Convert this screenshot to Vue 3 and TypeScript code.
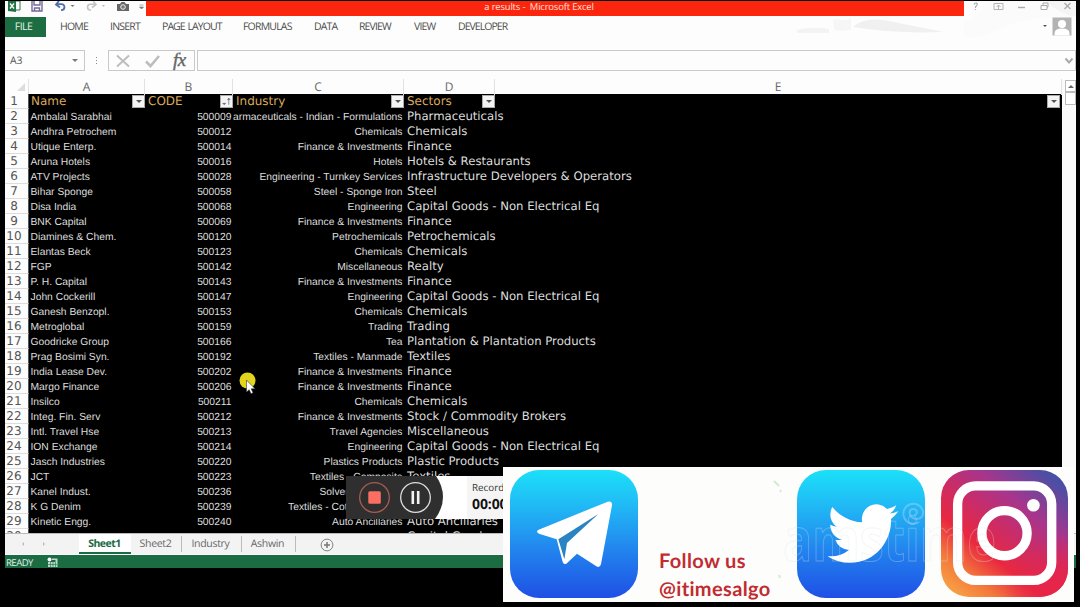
<script setup lang="ts">
interface Row {
  name: string
  code: string
  industry: string
  sector: string
}

const raw: [string, string, string, string][] = [
  ['Ambalal Sarabhai', '500009', 'armaceuticals - Indian - Formulations', 'Pharmaceuticals'],
  ['Andhra Petrochem', '500012', 'Chemicals', 'Chemicals'],
  ['Utique Enterp.', '500014', 'Finance & Investments', 'Finance'],
  ['Aruna Hotels', '500016', 'Hotels', 'Hotels & Restaurants'],
  ['ATV Projects', '500028', 'Engineering - Turnkey Services', 'Infrastructure Developers & Operators'],
  ['Bihar Sponge', '500058', 'Steel - Sponge Iron', 'Steel'],
  ['Disa India', '500068', 'Engineering', 'Capital Goods - Non Electrical Eq'],
  ['BNK Capital', '500069', 'Finance & Investments', 'Finance'],
  ['Diamines & Chem.', '500120', 'Petrochemicals', 'Petrochemicals'],
  ['Elantas Beck', '500123', 'Chemicals', 'Chemicals'],
  ['FGP', '500142', 'Miscellaneous', 'Realty'],
  ['P. H. Capital', '500143', 'Finance & Investments', 'Finance'],
  ['John Cockerill', '500147', 'Engineering', 'Capital Goods - Non Electrical Eq'],
  ['Ganesh Benzopl.', '500153', 'Chemicals', 'Chemicals'],
  ['Metroglobal', '500159', 'Trading', 'Trading'],
  ['Goodricke Group', '500166', 'Tea', 'Plantation & Plantation Products'],
  ['Prag Bosimi Syn.', '500192', 'Textiles - Manmade', 'Textiles'],
  ['India Lease Dev.', '500202', 'Finance & Investments', 'Finance'],
  ['Margo Finance', '500206', 'Finance & Investments', 'Finance'],
  ['Insilco', '500211', 'Chemicals', 'Chemicals'],
  ['Integ. Fin. Serv', '500212', 'Finance & Investments', 'Stock / Commodity Brokers'],
  ['Intl. Travel Hse', '500213', 'Travel Agencies', 'Miscellaneous'],
  ['ION Exchange', '500214', 'Engineering', 'Capital Goods - Non Electrical Eq'],
  ['Jasch Industries', '500220', 'Plastics Products', 'Plastic Products'],
  ['JCT', '500223', 'Textiles - Composite', 'Textiles'],
  ['Kanel Indust.', '500236', 'Solvent Extraction', 'Solvent Extraction'],
  ['K G Denim', '500239', 'Textiles - Cotton/Blended', 'Textiles'],
  ['Kinetic Engg.', '500240', 'Auto Ancillaries', 'Auto Ancillaries'],
  ['', '', '', 'Capital Goods'],
]
const rows: Row[] = raw.map(([name, code, industry, sector]) => ({ name, code, industry, sector }))
const ribbon = ['HOME', 'INSERT', 'PAGE LAYOUT', 'FORMULAS', 'DATA', 'REVIEW', 'VIEW', 'DEVELOPER']
const sheets = ['Sheet2', 'Industry', 'Ashwin']
</script>

<template>
  <div class="screen">
    <div class="excel">
      <header class="titlebar">
        <svg class="quick" width="141" height="15" viewBox="5 1 141 15">
          <path d="M14 1h6v9h-6z" fill="#fff" stroke="#287650" stroke-width="1" />
          <path d="M8 1h8v11l-8-1z" fill="#217346" />
          <path d="M10 3.5l4 5M14 3.5l-4 5" stroke="#fff" stroke-width="1.3" />
          <path d="M32 1v10h10V1M34 1v4h6V1M34.500 11V8h5v3" fill="none" stroke="#76689a" stroke-width="1.4" />
          <path d="M59 1l-3 3.500 4 3M56.500 4.200h5c4 0 4 6-.5 6" fill="none" stroke="#4b6fae" stroke-width="1.8" />
          <path d="M70.500 5h4l-2 2z" fill="#777" />
          <path d="M93 1l3 3.500-4 3M95.500 4.200h-5c-4 0-4 6 .5 6" fill="none" stroke="#c4c4c4" stroke-width="1.6" />
          <path d="M102 5h3l-1.500 2z" fill="#bbb" />
          <path d="M117 4h3l1.500-2h3l1.500 2h3v7h-12z" fill="#666" />
          <circle cx="123" cy="7" r="2.300" fill="#777" stroke="#eee" />
          <path d="M139.500 5h4M139.500 7h4l-2 2z" fill="#777" stroke="#777" stroke-width=".6" />
        </svg>
        <div class="title">a results -&nbsp; Microsoft Excel</div>
        <svg class="winctl" width="112" height="36" viewBox="964 1 112 36">
          <path d="M964 22q10-2 16-12t14-9h82v20q-40-8-76 8t-36 6z" fill="#fbfbfb" />
          <path d="M1046 1h30v16q-16-2-30-16z" fill="#f4f4f4" />
          <path d="M974 4.500c1-2.500 4-1.500 3 .5l-1.500 2v1M975.500 9v1" fill="none" stroke="#aaa" stroke-width="1.2" />
          <path d="M994 3.500h9v6h-9zM996.500 7l2-2 2 2M998.500 5v4" fill="none" stroke="#b4b4b4" />
          <path d="M1018 7.500h7" stroke="#aaa" stroke-width="1.4" />
          <path d="M1041 5.500h6v4h-6zM1043 5v-2h5v4h-1" fill="none" stroke="#aaa" />
          <path d="M1064.500 3l6 6M1070.500 3l-6 6" stroke="#aaa" stroke-width="1.3" />
          <path d="M1043 25h4l-2 2z" fill="#555" />
          <path d="M1052.500 17.500h19v18h-19z" fill="#b3b3b3" />
          <circle cx="1062" cy="24" r="4" fill="#fff" />
          <path d="M1054.500 35.500v-2q0-5 7.500-5t7.500 5v2z" fill="#fff" />
        </svg>
      </header>

      <nav class="ribbon">
        <span class="file">FILE</span>
        <span v-for="(t, i) in ribbon" :key="t" :class="['tab', 't' + i]">{{ t }}</span>
        <svg class="wave" width="170" height="18" viewBox="0 0 170 18">
          <path d="M0 14q14-4 32-1v4H0z" fill="#f3f3f3" />
          <path d="M36 3q9 2 18 0v10q-9 4-17 0z" fill="#f6f6f6" />
          <path d="M56 11q12-11 36-6t55 11q-50 2-91-5z" fill="#f0f0f0" />
        </svg>
      </nav>

      <div class="formula">
        <div class="namebox"><span>A3</span><i class="caret"></i></div>
        <div class="dots"><i></i><i></i><i></i></div>
        <div class="fx">
          <svg width="55" height="19" viewBox="0 0 55 19">
            <path d="M8 4.500l12 11M20 4.500l-12 11" stroke="#bdbdbd" stroke-width="1.900" />
            <path d="M37 10.500l4.500 4.500 8.500-10" fill="none" stroke="#bdbdbd" stroke-width="2.600" />
          </svg>
          <em>fx</em>
        </div>
        <div class="input">
          <svg width="10" height="8" viewBox="0 0 10 8"><path d="M1.500 1.500l3.500 4 3.500-4" fill="none" stroke="#aaa" stroke-width="2" /></svg>
        </div>
      </div>

      <div class="body">
        <div class="grid">
          <div class="cols">
            <span class="corner"><i></i></span>
            <span>A</span><span>B</span><span>C</span><span>D</span><span>E</span>
          </div>
          <div class="row head">
            <b>1</b>
            <span>Name<i class="filter"></i></span>
            <span>CODE<i class="filter sort"><svg width="12" height="13" viewBox="0 0 12 13"><path d="M2 8.500h3L3.500 10zM8.500 10V3M7 4.500L8.500 3 10 4.500" fill="#667" stroke="#667" stroke-width=".8" /></svg></i></span>
            <span>Industry<i class="filter"></i></span>
            <span>Sectors<i class="filter"></i></span>
            <span><i class="filter"></i></span>
          </div>
          <div v-for="(r, i) in rows" :key="i" class="row">
            <b>{{ i + 2 }}</b>
            <span class="name">{{ r.name }}</span>
            <span class="num">{{ r.code }}</span>
            <span class="num">{{ r.industry }}</span>
            <span class="sector">{{ r.sector }}</span>
            <span></span>
          </div>
        </div>
        <aside class="scroll"><div class="up"><i></i></div><div class="thumb"></div></aside>
      </div>

      <div class="sheets">
        <div class="arrows"><i class="prev"></i><i class="next"></i></div>
        <div class="sheet active">Sheet1</div>
        <div v-for="s in sheets" :key="s" class="sheet" :class="s.toLowerCase()">{{ s }}</div>
        <svg class="add" width="14" height="14" viewBox="0 0 14 14">
          <circle cx="7" cy="7" r="5.900" fill="none" stroke="#858585" />
          <path d="M7 4v6M4 7h6" stroke="#777" stroke-width="1.500" />
        </svg>
      </div>
      <footer class="status">
        <span>READY</span>
        <svg width="12" height="11" viewBox="0 0 12 11">
          <circle cx="2.500" cy="2.500" r="2" fill="#fff" />
          <path d="M5 1.500h5.500V3H5zM1 5h9.500v5H1zM8.500 2h2v8h-2z" fill="#b9dac7" />
          <path d="M3.500 5v5M6 5v5M8.500 5v5M1 7.500h9" stroke="#1b6b43" stroke-width=".6" />
        </svg>
      </footer>
    </div>

    <svg class="cursor" width="22" height="26" viewBox="0 0 22 26">
      <circle cx="9.500" cy="9.500" r="8" fill="#e4d41c" />
      <path d="M8.500 9v12l2.700-2.300 1.800 4 2-1-1.800-3.900h3.800z" fill="#fff" stroke="#333" stroke-width=".6" />
    </svg>

    <div class="recorder">
      <svg width="97" height="43" viewBox="0 0 97 43">
        <path d="M0 0h90q7 10 7 21t-8 22H0z" fill="#302f2f" />
        <circle cx="28.500" cy="21.500" r="14.800" fill="none" stroke="#a85c50" stroke-width="1.300" />
        <rect x="22.300" y="15.300" width="12.500" height="12.500" rx="1.500" fill="#fb6e62" />
        <circle cx="69.500" cy="21.500" r="14.800" fill="none" stroke="#dedede" stroke-width="1.300" />
        <path d="M66.800 15v13M72.200 15v13" stroke="#f2f2f2" stroke-width="2.600" />
      </svg>
      <div class="timer"><span>Recording</span><strong>00:00:00</strong></div>
    </div>

    <section class="banner">
      <svg class="telegram" width="128" height="128" viewBox="0 0 384 384">
        <defs>
          <linearGradient id="sky" x1="0" y1="0" x2="0" y2="1">
            <stop offset="0" stop-color="#1be0f8" />
            <stop offset=".22" stop-color="#20c2f6" />
            <stop offset=".6" stop-color="#2288ef" />
            <stop offset="1" stop-color="#1f4fe5" />
          </linearGradient>
        </defs>
        <rect width="384" height="384" rx="88" fill="url(#sky)" />
        <path d="M86 179L293 95q14-3 13 11l-33 176q-3 13-14 7l-58-38-32 30q-8 4-11-5l-18-68-53-17q-12-6-1-12z" fill="#fff" />
        <path d="M145 208L265 132 171 219 163 268z" fill="#2a84c2" />
      </svg>
      <p>Follow us<br />@itimesalgo</p>
      <svg class="twitter" width="128" height="128" viewBox="0 0 128 128">
        <rect width="128" height="128" rx="29" fill="url(#sky)" />
        <path transform="translate(30.500 27.500) scale(2.950 3)" fill="#fff" d="M23.953 4.570a10 10 0 01-2.825.775 4.958 4.958 0 002.163-2.723c-.951.555-2.005.959-3.127 1.184a4.920 4.920 0 00-8.384 4.482C7.690 8.095 4.067 6.130 1.640 3.162a4.822 4.822 0 00-.666 2.475c0 1.710.870 3.213 2.188 4.096a4.904 4.904 0 01-2.228-.616v.060a4.923 4.923 0 003.946 4.827 4.996 4.996 0 01-2.212.085 4.936 4.936 0 004.604 3.417 9.867 9.867 0 01-6.102 2.105c-.390 0-.779-.023-1.170-.067a13.995 13.995 0 007.557 2.209c9.053 0 13.998-7.496 13.998-13.985 0-.210 0-.420-.015-.630A9.935 9.935 0 0024 4.590z" />
      </svg>
      <svg class="insta" width="127" height="127" viewBox="0 0 382 382">
        <defs>
          <linearGradient id="ig" x1=".1" y1="1" x2=".9" y2="0">
            <stop offset="0" stop-color="#f8a545" />
            <stop offset=".16" stop-color="#f47a3c" />
            <stop offset=".34" stop-color="#e9283f" />
            <stop offset=".5" stop-color="#cf2b62" />
            <stop offset=".7" stop-color="#a8358c" />
            <stop offset=".95" stop-color="#4a4fa5" />
          </linearGradient>
          <radialGradient id="igr" cx="1" cy="1" r=".5">
            <stop offset="0" stop-color="#e82448" />
            <stop offset=".4" stop-color="#e82448" stop-opacity=".8" />
            <stop offset="1" stop-color="#e82448" stop-opacity="0" />
          </radialGradient>
        </defs>
        <rect width="382" height="382" rx="84" fill="url(#ig)" />
        <rect width="382" height="382" rx="84" fill="url(#igr)" />
        <rect x="50" y="48" width="283" height="284" rx="54" fill="none" stroke="#fff" stroke-width="28" />
        <circle cx="191" cy="190" r="68" fill="none" stroke="#fff" stroke-width="28" />
        <circle cx="278" cy="106" r="19" fill="#fff" />
      </svg>
      <svg class="mark" width="571" height="135" viewBox="503 467 571 135">
        <text x="783" y="561" textLength="213" lengthAdjust="spacingAndGlyphs">amstime</text>
        <path d="M919 522a10 10 0 1 1 4-11c1 8-6 9-10 7s-5-9 0-9 5 6 1 6" />
        <path class="speck" d="M774 481l5 5M780 490l1 2M779 575l1 3" />
      </svg>
    </section>
  </div>
</template>

<style>
body { margin: 0; background: #000; }
</style>

<style scoped>
* { box-sizing: border-box; }
.screen { position: relative; width: 1080px; height: 607px; padding: 1px 4px 0 5px; overflow: hidden; background: #000; font-family: "Open Sans", sans-serif; text-rendering: geometricPrecision; }
.excel { width: 1071px; height: 567px; display: flex; flex-direction: column; background: #fdfdfd; overflow: hidden; }
.titlebar { display: flex; height: 15px; flex: none; }
.quick, .winctl { display: block; flex: none; }
.winctl { position: relative; z-index: 1; }
.title { width: 818px; height: 16px; margin-top: -1px; background: #fc260f; border-top: 1px solid #b01008; color: #ffe3dc; font-size: 9.400px; line-height: 12px; text-align: center; letter-spacing: -.15px; text-indent: -32px; }
.ribbon { display: flex; height: 21px; flex: none; line-height: 23px; font-size: 10.500px; color: #4c4c4c; white-space: nowrap; }
.file { width: 41px; margin-top: 1px; height: 20px; line-height: 21px; background: #1d6d43; color: #e4f1e9; text-align: center; padding-right: 4px; letter-spacing: -.6px; }
.tab { flex: none; letter-spacing: -.88px; }
.t0 { margin-left: 14px; width: 50px; letter-spacing: -.8px; }
.t1 { width: 52px; letter-spacing: -.8px; }
.t2 { width: 81px; letter-spacing: -.93px; word-spacing: 1px; }
.t3 { width: 71px; letter-spacing: -.8px; }
.t4 { width: 45px; }
.t5 { width: 55px; }
.t6 { width: 44px; }
.t7 { width: 52px; letter-spacing: -.95px; }
.wave { margin-left: 287px; }
.formula { display: flex; height: 20px; flex: none; margin-top: 13px; }
.formula > div { height: 21px; }
.namebox { width: 80px; border: 1px solid #c9c9c9; border-left: 0; display: flex; align-items: center; justify-content: space-between; padding: 0 6px 0 5px; font-size: 10.500px; color: #555; letter-spacing: -.2px; }
.caret { border: 3px solid transparent; border-top-color: #777; border-bottom: 0; }
.dots { width: 23px; display: flex; flex-direction: column; gap: 2px; align-items: center; justify-content: center; }
.dots i { width: 1px; height: 1px; background: #888; }
.fx { width: 87px; border: 1px solid #c9c9c9; display: flex; }
.fx em { font: italic 400 19px/20px "Liberation Serif", serif; color: #666; margin-left: 9px; letter-spacing: -.5px; -webkit-text-stroke: .4px #666; }
.input { flex: 1; margin-left: 2px; border: 1px solid #c9c9c9; display: flex; align-items: center; justify-content: flex-end; padding-right: 1px; }
.body { display: flex; height: 463px; flex: none; overflow: hidden; padding-top: 9px; }
.grid { width: 1057px; flex: none; }
.cols, .row { display: grid; grid-template-columns: 24px 116px 88px 171px 91px 567px; }
.cols { height: 15px; font: 12px/15px "Open Sans", sans-serif; color: #666; text-align: center; }
.cols span { border-right: 1px solid #e2e2e2; }
.corner { display: flex; justify-content: flex-end; padding: 4px 3px; }
.corner i { width: 8px; height: 8px; background: #ddd; clip-path: polygon(100% 0, 100% 100%, 0 100%); }
.row { height: 15px; line-height: 17px; background: #000; color: #dedede; white-space: nowrap; }
.row b { height: 15px; background: #fdfdfd; border-bottom: 1px solid #ddd; font: 12px/15px "DejaVu Sans", sans-serif; color: #555; text-align: center; padding-right: 5px; border-right: 1px solid #555; }
.row span { min-width: 0; height: 15px; padding: 0 2px 0 1.500px; font-family: "Liberation Sans", Arial, sans-serif; font-size: 10.300px; }
.row .num { text-align: right; padding-right: 1.500px; padding-left: 0; }
.row .sector { font: 11.700px/15px "DejaVu Sans", sans-serif; padding-left: 3px; }
.row.head span { display: flex; justify-content: space-between; font: 12px/15px "DejaVu Sans", sans-serif; color: #d9a95c; padding: 0 0 0 3px; }
.row.head span:nth-child(2) { padding-left: 2px; }
.filter { width: 13px; height: 13px; margin: 1px 0 0 auto; background: #f4f4f4; border: 1px solid #aaa; display: flex; align-items: center; justify-content: center; }
.filter:not(.sort)::after { content: ""; border: 3px solid transparent; border-top-color: #555; border-bottom: 0; }
.row.head span:last-child { padding-right: 2px; }
.scroll { width: 14px; margin-top: 1px; padding-left: 3px; background: #fafafa; }
.up, .thumb { height: 12px; border: 1px solid #bbb; background: #fff; }
.thumb { height: 13px; }
.up { display: flex; align-items: center; justify-content: center; }
.up i { border: 3px solid transparent; border-bottom-color: #666; border-top: 0; }
.sheets { height: 21px; flex: none; display: flex; background: #f3f3f3; border-top: 1px solid #bbb; font-size: 10.500px; line-height: 20px; color: #666; }
.arrows { width: 74px; display: flex; align-items: center; gap: 19px; padding-left: 17px; }
.arrows i { border: 2.500px solid transparent; }
.prev { border-right-color: #bbb !important; border-left: 0 !important; }
.next { border-left-color: #bbb !important; border-right: 0 !important; }
.sheet { width: 51px; height: 16px; margin-top: 2px; line-height: 17px; text-align: center; border-right: 1px solid #bbb; letter-spacing: -.3px; padding-right: 1px; }
.sheet.active { width: 52px; height: 20px; margin: 0; line-height: 20px; background: #fff; color: #1b6b43; font-weight: 700; border: 0; border-bottom: 2px solid #1b6b43; letter-spacing: -.5px; }
.sheet.industry { width: 60px; padding-right: 2px; }
.sheet.ashwin { width: 54px; padding-right: 2px; }
.add { margin: 4px 0 0 24px; }
.status { height: 13px; flex: none; display: flex; margin-top: 1px; background: #1b6b43; color: #e4f1e9; font-size: 9.500px; line-height: 16px; padding-left: 1px; letter-spacing: -.5px; }
.status span { width: 41px; }
.status svg { margin-top: 2px; }
.cursor { position: absolute; left: 238px; top: 371px; }
.recorder { position: absolute; left: 346px; top: 476px; width: 160px; height: 43px; display: flex; background: linear-gradient(90deg, #302f2f 50px, #fff 50px); }
.recorder > svg { flex: none; }
.timer { width: 63px; margin-left: 24px; background: #f5f5f5; padding-left: 5px; display: flex; flex-direction: column; color: #333; font-size: 9.800px; line-height: 13px; padding-top: 5px; white-space: nowrap; flex: none; }
.timer strong { font: 700 14px/21px "Open Sans", sans-serif; color: #111; letter-spacing: -.1px; }
.banner { position: absolute; left: 503px; top: 467px; width: 571px; height: 135px; background: #fdfdfc; display: flex; padding: 3px 0 0 6.500px; }
.banner p { width: 137px; margin: 77px 0 0 21.500px; font: 700 20px/28px Lato, sans-serif; font-variant-ligatures: none; letter-spacing: .35px; color: #c12c30; white-space: nowrap; }
.twitter { margin-left: 1px; }
.insta { margin-left: 15.500px; }
.banner > svg { flex: none; }
.mark { position: absolute; left: 0; top: 0; }
.mark text { font: 700 60px "Open Sans", sans-serif; fill: none; stroke: #dfe4ea; stroke-width: 1; opacity: .32; }
.mark path { fill: none; stroke: #cfdcf0; stroke-width: 2; opacity: .35; }
.mark .speck { stroke: #b8e0b8; opacity: .6; }
</style>
